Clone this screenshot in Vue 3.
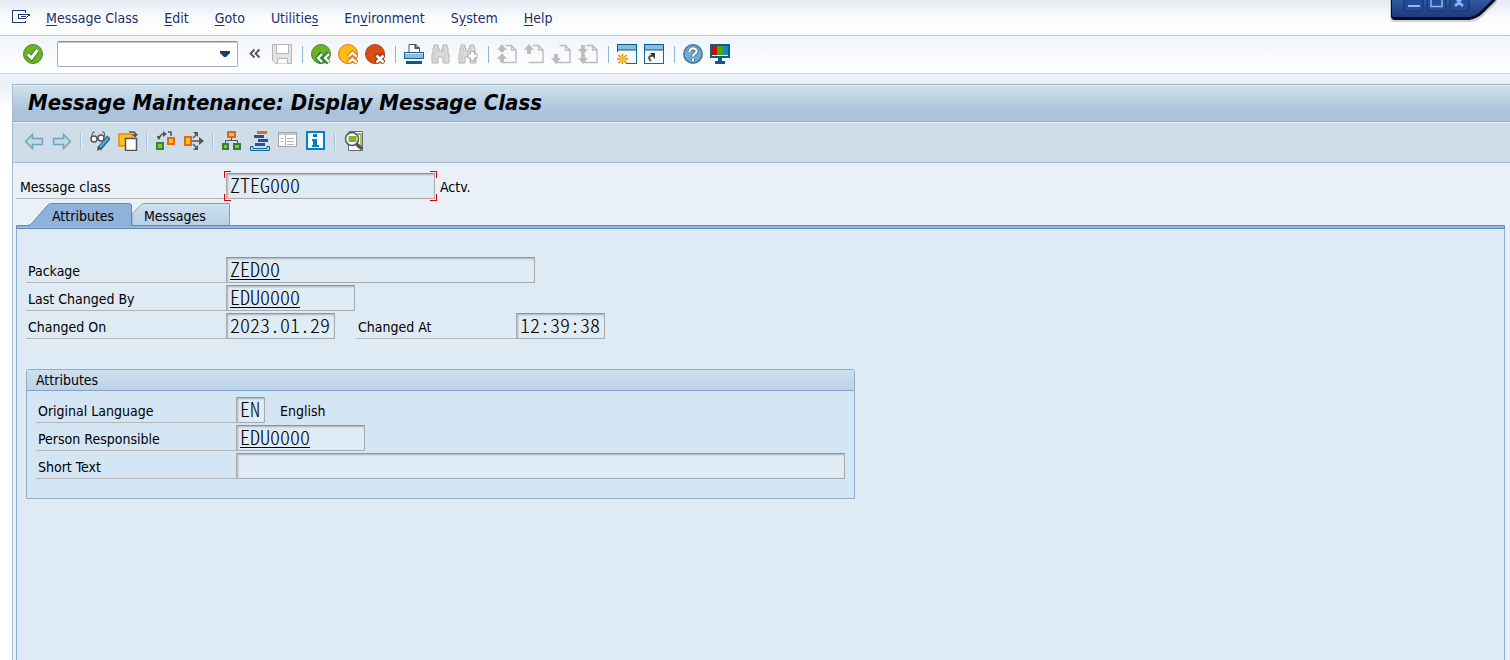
<script setup>
import { ref } from 'vue'

const menus = [
  { before: '', key: 'M', after: 'essage Class' },
  { before: '', key: 'E', after: 'dit' },
  { before: '', key: 'G', after: 'oto' },
  { before: 'Utilitie', key: 's', after: '' },
  { before: 'En', key: 'v', after: 'ironment' },
  { before: 'S', key: 'y', after: 'stem' },
  { before: '', key: 'H', after: 'elp' },
]

const page = '<path d="M8.500 1.500H14.500L19 6V18.500H4.500M14.500 1.500V6H19" fill="none" stroke="#bdbdbd" stroke-width="1.500"/>'
const binoculars = '<path d="M3 1h4v3h1v3h3V4h1V1h4v3h1v6h1v9h-6v-6H7v6H1v-9h1V4h1z" fill="#dcdcdc" stroke="#b4b4b4"/><path d="M5 4v5M4 10v7M13 4v5M14 10v7M8 8h3" stroke="#c4c4c4" fill="none"/>'

const icons = {
  enter: '<circle cx="10" cy="10" r="9.500" fill="#6cb31c" stroke="#44853f"/><path d="M5 10.500L8.500 14L14.500 6" fill="none" stroke="#3f7a35" stroke-width="5"/><path d="M5 10.500L8.500 14L14.500 6" fill="none" stroke="#fff" stroke-width="3"/>',
  collapse: '<path d="M9.500 5.500L5.500 9.500L9.500 13.500M14.500 5.500L10.500 9.500L14.500 13.500" fill="none" stroke="#555" stroke-width="1.800"/>',
  save: '<path d="M.5.500H19.500V19.500H3.500L.5 16.500z" fill="#e3e3e3" stroke="#b5b5b5"/><path d="M4.500.500H16.500V9.500H4.500zM5.500 19.500V14.500H15.500V19.500" fill="#fff" stroke="#b5b5b5"/>',
  back: '<circle cx="10" cy="10" r="9.500" fill="#6cb31c" stroke="#44853f"/><path d="M11 9L7 14L11 19M17.500 9L13.500 14L17.500 19" fill="none" stroke="#3a8044" stroke-width="5"/><path d="M11 10L7 14L11 18M18 10L14 14L18 18" fill="none" stroke="#fff" stroke-width="2.200"/>',
  exit: '<circle cx="10" cy="10" r="9.500" fill="#fdbd12" stroke="#e06c23"/><path d="M10 13L14.500 9L19 13M10 19L14.500 15L19 19" fill="none" stroke="#e58225" stroke-width="5"/><path d="M10.500 12.500L14.500 9L18.500 12.500M10.500 18.500L14.500 15L18.500 18.500" fill="none" stroke="#fff" stroke-width="2.200"/>',
  cancel: '<circle cx="10" cy="10" r="9.500" fill="#d84d12" stroke="#ac3f16"/><path d="M11 10.500L19 19M19 10.500L11 19" stroke="#9b3512" stroke-width="5"/><path d="M11.500 11.500L18.500 18.500M18.500 11.500L11.500 18.500" stroke="#fff" stroke-width="2.600"/>',
  print: '<path d="M5 8V.5H12L15.500 4V8" fill="#fff" stroke="#555"/><path d="M11.500.500V4H15.500" fill="none" stroke="#555" stroke-width="2"/><rect x=".5" y="8.500" width="19" height="6" fill="#91b9dc" stroke="#17649b"/><path d="M1 9.500H19" stroke="#d8e8f4"/><rect x="2" y="17" width="16" height="3" fill="#005b8f"/>',
  find: binoculars,
  findNext: binoculars + '<path d="M14.500 7v10M9.500 12h10" stroke="#adadad" stroke-width="5"/><path d="M14.500 8v8M10.500 12h8" stroke="#fff" stroke-width="3"/>',
  first: page + '<path d="M0 6L5 0L10 6H7V8H3V6zM0 15L5 9L10 15H7V18H3V15z" fill="#bdbdbd"/>',
  previous: page + '<path d="M0 6L5 0L10 6H7V10H3V6z" fill="#bdbdbd"/>',
  next: page + '<path d="M3 10H7V14H10L5 20L0 14H3z" fill="#bdbdbd"/>',
  last: page + '<path d="M3 1H7V5H10L5 11L0 5H3zM3 10H7V14H10L5 20L0 14H3z" fill="#bdbdbd"/>',
  session: '<rect x=".5" y=".5" width="19" height="19" fill="#f8fafb" stroke="#1a6798"/><path d="M.5.500H19.500V6H.5z" fill="#91b9dc" stroke="#005b8f"/><path d="M0 8H9V20H0z" fill="#f8fafb"/><path d="M5.500 10v10M0 15h11M1.500 11l8 8M9.500 11l-8 8" stroke="#ef7d13" stroke-width="1.500"/><circle cx="5.500" cy="15" r="3" fill="#fdc514"/>',
  shortcut: '<rect x=".5" y=".5" width="19" height="19" fill="#f8fafb" stroke="#1a6798"/><path d="M.5.500H19.500V6H.5z" fill="#91b9dc" stroke="#005b8f"/><path d="M7 17C3 13 6 11 10 12" fill="none" stroke="#555" stroke-width="2"/><path d="M6 9h5v6z" fill="#333"/>',
  help: '<circle cx="10" cy="10" r="9.200" fill="#74a7d1" stroke="#47769d" stroke-width="1.500"/><path d="M6.500 8C6.500 3 14 3.500 13.500 7.500C13 10 10 9.500 10 12.500M10 14.500V17" fill="none" stroke="#3f7299" stroke-width="4"/><path d="M6.500 8C6.500 3 14 3.500 13.500 7.500C13 10 10 9.500 10 12.500M10 14.500V17" fill="none" stroke="#fff" stroke-width="2.200"/>',
  layout: '<rect x="1" y="1" width="18" height="12" fill="#fff" stroke="#006091" stroke-width="2"/><path d="M2 2h5v9h-5z" fill="#bd1209"/><path d="M7 2h6v9h-6z" fill="#49a80b"/><path d="M13 2h5v9h-5z" fill="#1f7fc9"/><path d="M8 14h4v3h3v3H5v-3h3z" fill="#005b8f"/>',
  left: '<path d="M1.500 10.500L8.500 3.500V7.500H18.500V13.500H8.500V17.500z" fill="#bed8e6" stroke="#73a2bb" stroke-width="1.500"/>',
  right: '<path d="M18.500 10.500L11.500 3.500V7.500H1.500V13.500H11.500V17.500z" fill="#bed8e6" stroke="#73a2bb" stroke-width="1.500"/>',
  toggle: '<path d="M1 7L3 1h2M8 7h3M12 1h2l1 5" fill="none" stroke="#555"/><circle cx="4" cy="8" r="3" fill="#fff" stroke="#555" stroke-width="1.500"/><circle cx="11" cy="7" r="3" fill="#fff" stroke="#555" stroke-width="1.500"/><path d="M19 6L9 18" stroke="#2b6e9d" stroke-width="5"/><path d="M18 7L10 16" stroke="#66a6ce" stroke-width="2"/><path d="M7 20L8 15L11 18z" fill="#34566b"/>',
  copy: '<rect x="1" y="3" width="13" height="12" fill="#fdc31a" stroke="#ee8900" stroke-width="1.500"/><path d="M7.500 7.500H18.500V19.500H7.500z" fill="#fff" stroke="#555" stroke-width="1.500"/><path d="M11 1H15Q18 1 18 5" stroke="#555" stroke-width="1.500" fill="none"/><path d="M14 3h6l-3 4z" fill="#555"/>',
  graph: '<rect x="1" y="12" width="6" height="6" fill="#8bc52a" stroke="#38853e" stroke-width="2"/><rect x="12" y="7" width="6" height="6" fill="#fdc31a" stroke="#e26723" stroke-width="2"/><path d="M3 8Q4 3 8 3M12 1h3v4" fill="none" stroke="#555" stroke-width="1.500"/><path d="M7 0l4 3l-4 3zM1 5l4 0l-3 4z" fill="#555"/>',
  spread: '<rect x="1" y="6" width="6" height="8" fill="#fdc31a" stroke="#e26723" stroke-width="2"/><path d="M8 10H17M9 7L13 3M9 13L13 17" stroke="#555" stroke-width="1.500"/><path d="M15 6L20 10L15 14zM9 1h5v5zM9 19h5v-5z" fill="#555"/>',
  tree: '<rect x="6" y="1" width="7" height="5" fill="#fdc31a" stroke="#df6525" stroke-width="2"/><path d="M9.500 7v3M3.500 12v-2.500h12v2.500" stroke="#555" fill="none"/><rect x="1" y="13" width="5" height="5" fill="#8bc52a" stroke="#397c3e" stroke-width="2"/><rect x="12" y="13" width="6" height="5" fill="#8bc52a" stroke="#397c3e" stroke-width="2"/>',
  list: '<path d="M7 0h10v3H7z" fill="#df692a"/><path d="M4 4h10v3H4zM8 8h10v3H8zM5 12h10v3H5z" fill="#27529b"/><path d="M.5 15.500H3V17.500H17V15.500H19.500V19.500H.5z" fill="#aed1e6" stroke="#176893"/>',
  detail: '<rect x=".5" y="1.500" width="18" height="14" fill="#fff" stroke="#a5a8aa"/><path d="M1 2h17v2H1z" fill="#bcc9d2"/><path d="M7.500 4v11M2.500 7.500h3M2.500 10.500h3M9 7.500h7M9 10.500h7M9 13.500h7" stroke="#b5b5b5"/>',
  info: '<rect x="1" y="1" width="17" height="17" fill="#fff" stroke="#0082c6" stroke-width="2"/><path d="M7 3h4v3H7zM6 8h5v6h2v2H6v-2h1v-4H6z" fill="#0082c6"/>',
  search: '<path d="M5 .5H18.500V19.500H4.500V6z" fill="#fff" stroke="#686868"/><path d="M13 3h4v13h-4" fill="none" stroke="#7eb62a" stroke-width="1.500"/><circle cx="8" cy="8" r="6.500" fill="#fff" stroke="#555" stroke-width="1.500"/><rect x="4.500" y="5" width="8" height="6" fill="#79b829"/><path d="M12.500 13L18 18" stroke="#555" stroke-width="3.500"/>',
}

const systemGroups = [
  ['back', 'exit', 'cancel'],
  ['print', 'find', 'findNext'],
  ['first', 'previous', 'next', 'last'],
  ['session', 'shortcut'],
  ['help', 'layout'],
]

const appGroups = [
  ['left', 'right'],
  ['toggle', 'copy'],
  ['graph', 'spread'],
  ['tree', 'list', 'detail', 'info'],
  ['search'],
]

const command = ref('')
const activeTab = ref('attributes')
</script>

<template>
  <div class="window">
    <header>
      <nav class="menubar">
        <button class="menu-icon" aria-label="Window menu">
          <svg width="20" height="16" viewBox="0 0 20 16" fill="none" stroke="#1e3a70" shape-rendering="crispEdges">
            <path d="M13.500 3V.5H.5V12.500H13.500V10.500" />
            <path d="M18 4.500H6.500V8.500H13.500L18 4.500M9 6.500H14" />
          </svg>
        </button>
        <button v-for="m in menus" :key="m.key" class="menu">{{ m.before }}<u>{{ m.key }}</u>{{ m.after }}</button>
      </nav>
      <div class="toolbar">
        <button class="icon" aria-label="enter"><svg viewBox="0 0 20 20" v-html="icons.enter"></svg></button>
        <div class="command">
          <input v-model="command" aria-label="Command field" />
          <button aria-label="Command history">
            <svg width="10" height="6" viewBox="0 0 10 6"><path d="M0 0H10V2L6 6H4L0 2z" fill="#1e3a70" /></svg>
          </button>
        </div>
        <button class="icon" aria-label="collapse"><svg viewBox="0 0 20 20" v-html="icons.collapse"></svg></button>
        <button class="icon" aria-label="save"><svg viewBox="0 0 20 20" v-html="icons.save"></svg></button>
        <template v-for="(group, i) in systemGroups" :key="i">
          <span class="separator"></span>
          <button v-for="name in group" :key="name" class="icon" :aria-label="name">
            <svg viewBox="0 0 20 20" v-html="icons[name]"></svg>
          </button>
        </template>
      </div>
      <div class="window-controls">
        <svg width="112" height="26" viewBox="0 0 112 26">
          <defs>
            <linearGradient id="cap" x1="0" y1="0" x2="0" y2="1">
              <stop offset="0" stop-color="#3159a0" />
              <stop offset="1" stop-color="#1d3a7c" />
            </linearGradient>
          </defs>
          <path d="M1 0V18Q1 22 5 22H80Q90 22 98 12L108 2V0z" fill="#8a8088" opacity=".35" />
          <path d="M2 0V16Q2 20 6 20H80Q89 19 96 11L107 0z" fill="#050b22" />
          <path d="M3 0V15Q3 17 6 17H79Q86 17 92 11L103 0z" fill="url(#cap)" />
          <g fill="#264c96" stroke="#18316d">
            <rect x="15" y="-6" width="19" height="17" rx="2" />
            <rect x="38" y="-6" width="19" height="17" rx="2" />
            <rect x="61" y="-6" width="19" height="17" rx="2" />
          </g>
          <path d="M19 6H31" stroke="#8fb4ff" stroke-width="2" />
          <path d="M42 0V6.500H53V0" fill="none" stroke="#8fb4ff" stroke-width="1.500" />
          <path d="M66 6L70 2.500L74 6M67 -2L70 2L73 -2" fill="none" stroke="#8fb4ff" stroke-width="2.500" />
        </svg>
      </div>
    </header>

    <main>
      <h1>Message Maintenance: Display Message Class</h1>
      <div class="app-toolbar">
        <template v-for="(group, i) in appGroups" :key="i">
          <span v-if="i" class="separator"></span>
          <button v-for="name in group" :key="name" class="icon" :aria-label="name">
            <svg viewBox="0 0 20 20" v-html="icons[name]"></svg>
          </button>
        </template>
      </div>

      <div class="content">
        <div class="row key-row">
          <label for="message-class">Message class</label>
          <div class="focused">
            <input id="message-class" class="field w-class" value="ZTEG000" readonly />
            <i class="tl"></i><i class="tr"></i><i class="bl"></i><i class="br"></i>
          </div>
          <span class="status">Actv.</span>
        </div>

        <div class="tabs" role="tablist">
          <button class="tab first" role="tab" :aria-selected="activeTab === 'attributes'" @click="activeTab = 'attributes'">
            <svg width="104" height="24" viewBox="0 0 104 24">
              <path d="M0 24V22.500Q3 22 5 19L19 3Q21 .5 24 .5H101Q103.500.500 103.500 3V24z" fill="#8fb2dc" />
              <path d="M0 22.500Q3 22 5 19L19 3Q21 .5 24 .5H101Q103.500.500 103.500 3V23" fill="none" stroke="#6288b4" />
            </svg>
            <span>Attributes</span>
          </button>
          <button class="tab second" role="tab" :aria-selected="activeTab === 'messages'" @click="activeTab = 'messages'">
            <svg width="98" height="23" viewBox="0 0 98 23">
              <defs>
                <linearGradient id="tab" x1="0" y1="0" x2="0" y2="1">
                  <stop offset="0" stop-color="#cfe0f0" />
                  <stop offset="1" stop-color="#b8cfe6" />
                </linearGradient>
              </defs>
              <path d="M0 23V11L9 2Q10 .5 12 .5H97.500V23" fill="url(#tab)" stroke="#7f9fbd" />
            </svg>
            <span>Messages</span>
          </button>
        </div>

        <section class="panel">
          <div class="row">
            <label for="package">Package</label>
            <input id="package" class="field link w-package" value="ZED00" readonly />
          </div>
          <div class="row">
            <label for="changed-by">Last Changed By</label>
            <input id="changed-by" class="field link w-user" value="EDU0000" readonly />
          </div>
          <div class="row">
            <label for="changed-on">Changed On</label>
            <input id="changed-on" class="field w-date" value="2023.01.29" readonly />
            <label for="changed-at" class="inner-label">Changed At</label>
            <input id="changed-at" class="field w-time" value="12:39:38" readonly />
          </div>

          <section class="group">
            <h2>Attributes</h2>
            <div class="group-body">
              <div class="row">
                <label for="language">Original Language</label>
                <input id="language" class="field w-lang" value="EN" readonly />
                <span class="language-name">English</span>
              </div>
              <div class="row">
                <label for="person">Person Responsible</label>
                <input id="person" class="field link w-user" value="EDU0000" readonly />
              </div>
              <div class="row">
                <label for="short-text">Short Text</label>
                <input id="short-text" class="field w-text" value="" readonly />
              </div>
            </div>
          </section>
        </section>
      </div>
    </main>
  </div>
</template>

<style>
body {
  margin: 0;
  overflow: hidden;
}
</style>

<style scoped>
*,
*::before {
  box-sizing: border-box;
}

.window {
  display: flex;
  flex-direction: column;
  min-height: 100vh;
  font: 14px/20px "DejaVu Sans Condensed", "DejaVu Sans", sans-serif;
  font-stretch: condensed;
  color: #000;
  background: linear-gradient(#f1f5fa 74px, #eaf0f8 84px, #fff 110px);
}

button {
  padding: 0;
  border: 0;
  background: none;
  font: inherit;
  color: inherit;
}

.menubar {
  display: flex;
  align-items: center;
  height: 36px;
  padding-left: 12px;
  border-bottom: 1px solid #c3c9d2;
  background: linear-gradient(#e4e9f3, #fafbfd 50%, #fff);
  color: #1e2f68;
}

.menu-icon {
  width: 20px;
  height: 22px;
  margin-right: 14px;
}

.menu-icon svg,
.icon svg {
  display: block;
}

.menu {
  margin-right: 26px;
  white-space: nowrap;
}

.menu u {
  text-underline-offset: 2px;
}

.toolbar {
  display: flex;
  align-items: center;
  gap: 7px;
  height: 38px;
  padding: 0 0 1px 23px;
  border-bottom: 1px solid #ccd3dc;
  background: linear-gradient(#f0f4f9, #fff);
}

.icon,
.icon svg {
  width: 20px;
  height: 20px;
  flex: none;
}

.command {
  display: flex;
  align-items: center;
  width: 181px;
  height: 26px;
  margin-left: 7px;
  border: 1px solid #a9adb2;
  border-top-color: #8b8e93;
  border-radius: 2px;
  background: #fff;
  box-shadow: inset 0 1px #c4c7cb;
}

.command input {
  flex: 1;
  min-width: 0;
  border: 0;
  outline: 0;
  background: none;
  font: inherit;
}

.command button {
  display: grid;
  place-items: center;
  width: 24px;
  height: 20px;
}

.separator {
  width: 2px;
  height: 17px;
  background: #a9c4dd;
}

.toolbar .separator {
  width: 1px;
  margin: 0 1px 0 3px;
  background: #8fb4d4;
}

.window-controls {
  position: absolute;
  top: 0;
  right: 9px;
  height: 26px;
}

main {
  display: flex;
  flex: 1;
  flex-direction: column;
  margin: 10px 0 0 12px;
  border-left: 1px solid #a9bccd;
}

h1 {
  height: 38px;
  margin: 0;
  padding-left: 15px;
  border-top: 1px solid #9bafc5;
  border-bottom: 1px solid #93abc3;
  background: linear-gradient(#d3e1ed, #a9c2db 75%, #adc5dc);
  box-shadow: inset 0 1px #e5eff7;
  font-size: 22px;
  font-style: italic;
  line-height: 36px;
  white-space: nowrap;
}

.app-toolbar {
  display: flex;
  align-items: center;
  gap: 8px;
  height: 41px;
  padding: 0 0 2px 11px;
  border-bottom: 1px solid #a3bace;
  background: #cfdde8;
  box-shadow: inset 0 1px #e6eff6;
}

.app-toolbar .separator {
  border-right: 1px solid #e3edf5;
}

.content {
  display: flex;
  flex: 1;
  flex-direction: column;
  padding: 10px 5px 0 3px;
  background: #e9f0f7;
}

.row {
  display: flex;
  align-items: flex-start;
  height: 28px;
}

.row label {
  width: 200px;
  height: 26px;
  padding: 4px 0 0 2px;
  border-bottom: 1px solid #b5b7b9;
  white-space: nowrap;
}

.field {
  display: block;
  height: 26px;
  padding: 0 3px 4px;
  border: 1px solid #a7abad;
  border-top-color: #8f9396;
  border-radius: 1px;
  outline: 0;
  background: #dfebf5;
  box-shadow: inset 1px 1px 2px #aab4bc;
  font-family: "Noto Sans CJK KR", "Liberation Mono", monospace;
  font-size: 20px;
  font-weight: 300;
  font-feature-settings: "hwid";
  line-height: 20px;
  color: #000;
}

.link {
  text-decoration: underline;
  text-decoration-thickness: 1px;
  text-underline-offset: 2px;
}

.key-row {
  height: 30px;
}

.key-row label {
  width: 210px;
  padding-left: 4px;
}

.focused {
  position: relative;
}

.focused i {
  position: absolute;
  width: 7px;
  height: 7px;
  border: 0 solid #e00000;
}

.focused .tl { top: -2px; left: -2px; border-width: 1px 0 0 1px; }
.focused .tr { top: -2px; right: -2px; border-width: 1px 1px 0 0; }
.focused .bl { bottom: -2px; left: -2px; border-width: 0 0 1px 1px; }
.focused .br { bottom: -2px; right: -2px; border-width: 0 1px 1px 0; }

.status {
  padding: 4px 0 0 5px;
}

.w-class { width: 209px; }
.w-package { width: 309px; }
.w-user { width: 129px; }
.w-date { width: 109px; }
.w-time { width: 89px; }
.w-lang { width: 29px; }
.w-text { width: 609px; }

.tabs {
  display: flex;
  height: 22px;
  padding-left: 12px;
}

.tab {
  display: flex;
  position: relative;
  height: 24px;
  padding-top: 3px;
}

.tab svg {
  display: block;
  position: absolute;
  top: 0;
  left: 0;
}

.tab span {
  position: relative;
}

.tab[aria-selected="true"] {
  z-index: 1;
}

.first {
  width: 104px;
  padding-left: 24px;
}

.second {
  width: 98px;
  padding-left: 12px;
}

.panel {
  position: relative;
  flex: 1;
  padding: 32px 9px 0;
  border: 1px solid #8aaccf;
  border-top: 0;
  border-bottom: 0;
  background: #deebf5;
}

.panel::before {
  content: "";
  position: absolute;
  top: 0;
  left: -1px;
  right: -1px;
  height: 4px;
  border: 1px solid #6089b9;
  border-radius: 2px 2px 0 0;
  background: #9ab9dd;
}

.row .inner-label {
  width: 160px;
  margin-left: 21px;
}

.group {
  max-width: 829px;
  margin-top: 28px;
  border: 1px solid #8eadcd;
  border-radius: 3px 3px 0 0;
  background: #d4e5f3;
}

h2 {
  margin: 0;
  padding-left: 9px;
  border-bottom: 1px solid #82a3c8;
  border-radius: 2px 2px 0 0;
  background: linear-gradient(#cee0ee, #bcd2e7);
  font-size: 14px;
  font-weight: normal;
  line-height: 20px;
}

.group-body {
  padding: 6px 9px 17px;
}

.language-name {
  padding: 4px 0 0 15px;
}
</style>
